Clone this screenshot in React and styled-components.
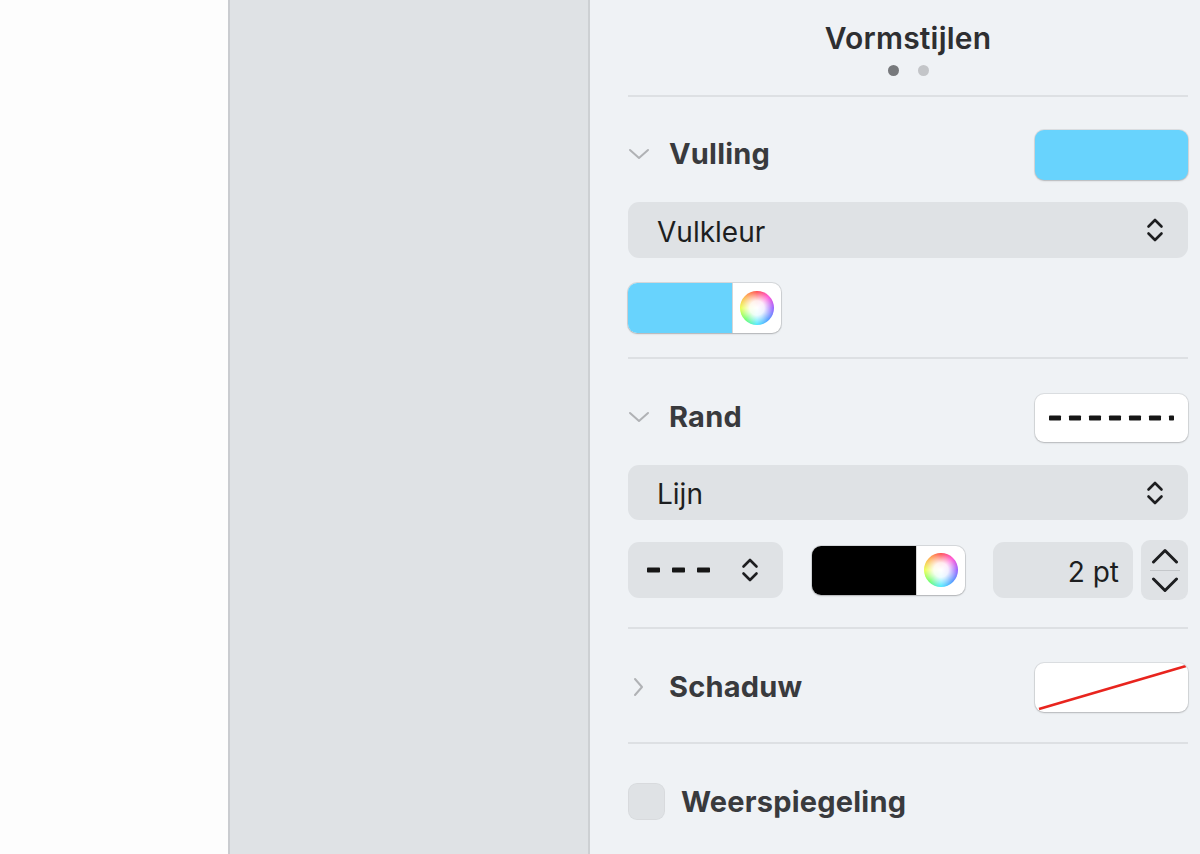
import React from "react";
import styled, { createGlobalStyle } from "styled-components";

const Global = createGlobalStyle`
  html, body { margin: 0; padding: 0; }
  body { font-family: Inter, "Noto Sans", "Liberation Sans", sans-serif; -webkit-font-smoothing: antialiased; }
  * { box-sizing: border-box; }
`;

const Shell = styled.div`
  display: flex;
  width: 1200px;
  height: 854px;
  overflow: hidden;
`;

const Sidebar = styled.div`
  width: 228px;
  background: #fdfdfd;
`;

const Canvas = styled.div`
  width: 362px;
  background: #dfe2e5;
  border-left: 2px solid #caccd0;
  border-right: 2px solid #cdd0d3;
`;

const Inspector = styled.div`
  flex: 1;
  background: #eff2f5;
  padding: 0 12px 0 38px;
  display: flex;
  flex-direction: column;
  color: #333538;
`;

const Header = styled.div`
  height: 95px;
  display: flex;
  flex-direction: column;
  align-items: center;
  padding-top: 21px;
`;

const Title = styled.div`
  font-size: 30px;
  line-height: 34px;
  font-weight: 600;
  color: #2e2f31;
  letter-spacing: 0.2px;
`;

const Dots = styled.div`
  display: flex;
  gap: 19px;
  margin-top: 10px;
`;

const Dot = styled.span`
  width: 11px;
  height: 11px;
  border-radius: 50%;
  background: ${(p) => (p.$active ? "#77797c" : "#c3c5c8")};
`;

const Divider = styled.div`
  height: 2px;
  background: #dde0e3;
`;

const Section = styled.div`
  display: flex;
  flex-direction: column;
  padding-top: ${(p) => p.$top}px;
  padding-bottom: ${(p) => p.$bottom}px;
`;

const HeadRow = styled.div`
  display: flex;
  align-items: center;
  height: ${(p) => p.$h || 50}px;
`;

const Disclosure = styled.span`
  width: 41px;
  display: flex;
  align-items: center;
  color: #b0b2b5;
  margin-top: -2px;
`;

const HeadLabel = styled.div`
  flex: 1;
  font-size: 29px;
  font-weight: 700;
  color: #393a3d;
  letter-spacing: 0.2px;
  margin-top: -3px;
`;

const Swatch = styled.div`
  width: 153px;
  height: 100%;
  border-radius: 9px;
  background: ${(p) => p.$color || "#fff"};
  box-shadow: 0 0 0 1px rgba(0, 0, 0, 0.08), 0 1px 2px rgba(0, 0, 0, 0.18);
  display: flex;
  align-items: center;
  justify-content: center;
  overflow: hidden;
`;

const Select = styled.div`
  height: ${(p) => p.$h || 56}px;
  margin-top: ${(p) => p.$mt || 22}px;
  border-radius: 11px;
  background: #dfe2e5;
  display: flex;
  align-items: center;
  justify-content: space-between;
  padding: 0 24px 0 29px;
  font-size: 28px;
  color: #1d1e20;
`;

const SelectText = styled.span`
  padding-top: 3px;
`;

const ColorWell = styled.div`
  width: 153px;
  height: ${(p) => p.$h || 50}px;
  margin-top: ${(p) => p.$mt || 0}px;
  border-radius: 9px;
  display: flex;
  overflow: hidden;
  background: #fff;
  box-shadow: 0 0 0 1px rgba(0, 0, 0, 0.1), 0 1px 2px rgba(0, 0, 0, 0.18);
`;

const WellColor = styled.div`
  width: 104px;
  background: ${(p) => p.$color};
`;

const WellPicker = styled.div`
  flex: 1;
  display: flex;
  align-items: center;
  justify-content: center;
  border-left: 1px solid #d6d6d6;
`;

const Wheel = styled.div`
  width: 34px;
  height: 34px;
  border-radius: 50%;
  background: radial-gradient(circle, #fff 0%, rgba(255, 255, 255, 0.9) 30%, rgba(255, 255, 255, 0) 75%),
    conic-gradient(#ff3b3b, #ff3bd0, #8b4dff, #3b8bff, #3be7ff, #5cff5c, #e8ff3b, #ffa53b, #ff3b3b);
`;

const ControlRow = styled.div`
  display: flex;
  align-items: center;
  height: 60px;
  margin-top: 20px;
`;

const DashSelect = styled.div`
  width: 155px;
  height: 56px;
  border-radius: 11px;
  background: #dfe2e5;
  display: flex;
  align-items: center;
  justify-content: space-between;
  padding: 0 24px 0 19px;
`;

const Spacer = styled.div`
  width: ${(p) => p.$w}px;
`;

const NumberField = styled.div`
  width: 140px;
  height: 56px;
  border-radius: 11px;
  background: #dfe2e5;
  display: flex;
  align-items: center;
  justify-content: flex-end;
  padding: 3px 14px 0 0;
  font-size: 28px;
  color: #1d1e20;
`;

const Stepper = styled.div`
  width: 47px;
  height: 60px;
  margin-left: 8px;
  border-radius: 9px;
  background: #dfe2e5;
  display: flex;
  flex-direction: column;
  align-items: center;
  justify-content: space-between;
  padding: 8px 0 7px;
`;

const StepLine = styled.div`
  width: 30px;
  height: 1px;
  background: #c4c7ca;
`;

const CheckRow = styled.div`
  display: flex;
  align-items: center;
  gap: 16px;
  height: 37px;
`;

const Checkbox = styled.div`
  width: 37px;
  height: 37px;
  border-radius: 9px;
  background: #dfe2e5;
  box-shadow: inset 0 0 0 1px rgba(0, 0, 0, 0.03);
`;

const CheckLabel = styled.div`
  font-size: 29px;
  font-weight: 700;
  color: #393a3d;
  letter-spacing: 0.2px;
`;

const Chevron = ({ open }) =>
  open ? (
    <svg width="22" height="12" viewBox="0 0 22 12" fill="none" stroke="currentColor" strokeWidth="2" strokeLinecap="round" strokeLinejoin="round">
      <path d="M2 2l9 8 9-8" />
    </svg>
  ) : (
    <svg width="22" height="22" viewBox="0 0 22 22" fill="none" stroke="currentColor" strokeWidth="2" strokeLinecap="round" strokeLinejoin="round">
      <path d="M7 3l7 8-7 8" />
    </svg>
  );

const UpDown = () => (
  <svg width="18" height="26" viewBox="0 0 18 26" fill="none" stroke="#1d1e20" strokeWidth="2.6" strokeLinecap="round" strokeLinejoin="round">
    <path d="M2.5 9.5l6.5-6.5 6.5 6.5" />
    <path d="M2.5 16.5l6.5 6.5 6.5-6.5" />
  </svg>
);

const StepUp = () => (
  <svg width="28" height="16" viewBox="0 0 28 16" fill="none" stroke="#1d1e20" strokeWidth="3" strokeLinecap="round" strokeLinejoin="round">
    <path d="M2.5 14l11.5-11.5 11.5 11.5" />
  </svg>
);

const StepDown = () => (
  <svg width="28" height="16" viewBox="0 0 28 16" fill="none" stroke="#1d1e20" strokeWidth="3" strokeLinecap="round" strokeLinejoin="round">
    <path d="M2.5 2l11.5 11.5 11.5-11.5" />
  </svg>
);

const DashLine = ({ count, dash, gap, dot }) => {
  const width = (count - 1) * (dash + gap) + (dot ? 5 : dash);
  return (
    <svg width={width} height="6" viewBox={`0 0 ${width} 6`}>
      {Array.from({ length: count }).map((_, i) => (
        <rect key={i} x={i * (dash + gap)} y="0.5" width={dot && i === count - 1 ? 5 : dash} height="5" rx="0.8" fill="#161616" />
      ))}
    </svg>
  );
};

const NoShadow = () => (
  <svg width="153" height="49" viewBox="0 0 153 49">
    <line x1="4" y1="46" x2="151" y2="3" stroke="#e8241e" strokeWidth="2.6" />
  </svg>
);

export default function App() {
  return (
    <>
      <Global />
      <Shell>
        <Sidebar />
        <Canvas />
        <Inspector>
          <Header>
            <Title>Vormstijlen</Title>
            <Dots>
              <Dot $active />
              <Dot />
            </Dots>
          </Header>
          <Divider />

          <Section $top={33} $bottom={24}>
            <HeadRow>
              <Disclosure>
                <Chevron open />
              </Disclosure>
              <HeadLabel>Vulling</HeadLabel>
              <Swatch $color="#68d3fd" />
            </HeadRow>
            <Select>
              <SelectText>Vulkleur</SelectText>
              <UpDown />
            </Select>
            <ColorWell $mt={25}>
              <WellColor $color="#68d3fd" />
              <WellPicker>
                <Wheel />
              </WellPicker>
            </ColorWell>
          </Section>
          <Divider />

          <Section $top={35} $bottom={27}>
            <HeadRow $h={48}>
              <Disclosure>
                <Chevron open />
              </Disclosure>
              <HeadLabel>Rand</HeadLabel>
              <Swatch>
                <DashLine count={7} dash={12} gap={8} dot />
              </Swatch>
            </HeadRow>
            <Select $h={55} $mt={23}>
              <SelectText>Lijn</SelectText>
              <UpDown />
            </Select>
            <ControlRow>
              <DashSelect>
                <DashLine count={3} dash={13} gap={12} />
                <UpDown />
              </DashSelect>
              <Spacer $w={29} />
              <ColorWell $h={49}>
                <WellColor $color="#000" />
                <WellPicker>
                  <Wheel />
                </WellPicker>
              </ColorWell>
              <Spacer $w={28} />
              <NumberField>2 pt</NumberField>
              <Stepper>
                <StepUp />
                <StepLine />
                <StepDown />
              </Stepper>
            </ControlRow>
          </Section>
          <Divider />

          <Section $top={34} $bottom={30}>
            <HeadRow $h={49}>
              <Disclosure>
                <Chevron />
              </Disclosure>
              <HeadLabel>Schaduw</HeadLabel>
              <Swatch>
                <NoShadow />
              </Swatch>
            </HeadRow>
          </Section>
          <Divider />

          <Section $top={39} $bottom={0}>
            <CheckRow>
              <Checkbox />
              <CheckLabel>Weerspiegeling</CheckLabel>
            </CheckRow>
          </Section>
        </Inspector>
      </Shell>
    </>
  );
}
